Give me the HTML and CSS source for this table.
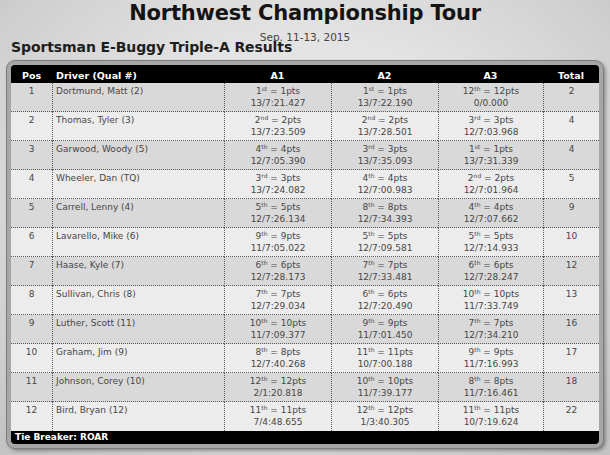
FILE: index.html
```html
<!DOCTYPE html>
<html lang="en">
<head>
<meta charset="utf-8">
<title>Northwest Championship Tour</title>
<link rel="stylesheet" href="styles.css">
</head>
<body>
<header class="head">
  <h1 class="title">Northwest Championship Tour</h1>
  <div class="date">Sep. 11-13, 2015</div>
  <h2 class="subtitle">Sportsman E-Buggy Triple-A Results</h2>
</header>
<div class="frame">
  <div class="board">
    <table class="results">
      <thead>
        <tr>
          <th class="c-pos">Pos</th>
          <th class="c-drv">Driver (Qual #)</th>
          <th class="c-a1">A1</th>
          <th class="c-a2">A2</th>
          <th class="c-a3">A3</th>
          <th class="c-tot">Total</th>
        </tr>
      </thead>
      <tbody>
        <tr class="odd">
          <td class="pos">1</td><td class="drv">Dortmund, Matt (2)</td>
          <td class="run">1<sup>st</sup> = 1pts<br>13/7:21.427</td>
          <td class="run">1<sup>st</sup> = 1pts<br>13/7:22.190</td>
          <td class="run">12<sup>th</sup> = 12pts<br>0/0.000</td>
          <td class="tot">2</td>
        </tr>
        <tr class="even">
          <td class="pos">2</td><td class="drv">Thomas, Tyler (3)</td>
          <td class="run">2<sup>nd</sup> = 2pts<br>13/7:23.509</td>
          <td class="run">2<sup>nd</sup> = 2pts<br>13/7:28.501</td>
          <td class="run">3<sup>rd</sup> = 3pts<br>12/7:03.968</td>
          <td class="tot">4</td>
        </tr>
        <tr class="odd">
          <td class="pos">3</td><td class="drv">Garwood, Woody (5)</td>
          <td class="run">4<sup>th</sup> = 4pts<br>12/7:05.390</td>
          <td class="run">3<sup>rd</sup> = 3pts<br>13/7:35.093</td>
          <td class="run">1<sup>st</sup> = 1pts<br>13/7:31.339</td>
          <td class="tot">4</td>
        </tr>
        <tr class="even">
          <td class="pos">4</td><td class="drv">Wheeler, Dan (TQ)</td>
          <td class="run">3<sup>rd</sup> = 3pts<br>13/7:24.082</td>
          <td class="run">4<sup>th</sup> = 4pts<br>12/7:00.983</td>
          <td class="run">2<sup>nd</sup> = 2pts<br>12/7:01.964</td>
          <td class="tot">5</td>
        </tr>
        <tr class="odd">
          <td class="pos">5</td><td class="drv">Carrell, Lenny (4)</td>
          <td class="run">5<sup>th</sup> = 5pts<br>12/7:26.134</td>
          <td class="run">8<sup>th</sup> = 8pts<br>12/7:34.393</td>
          <td class="run">4<sup>th</sup> = 4pts<br>12/7:07.662</td>
          <td class="tot">9</td>
        </tr>
        <tr class="even">
          <td class="pos">6</td><td class="drv">Lavarello, Mike (6)</td>
          <td class="run">9<sup>th</sup> = 9pts<br>11/7:05.022</td>
          <td class="run">5<sup>th</sup> = 5pts<br>12/7:09.581</td>
          <td class="run">5<sup>th</sup> = 5pts<br>12/7:14.933</td>
          <td class="tot">10</td>
        </tr>
        <tr class="odd">
          <td class="pos">7</td><td class="drv">Haase, Kyle (7)</td>
          <td class="run">6<sup>th</sup> = 6pts<br>12/7:28.173</td>
          <td class="run">7<sup>th</sup> = 7pts<br>12/7:33.481</td>
          <td class="run">6<sup>th</sup> = 6pts<br>12/7:28.247</td>
          <td class="tot">12</td>
        </tr>
        <tr class="even">
          <td class="pos">8</td><td class="drv">Sullivan, Chris (8)</td>
          <td class="run">7<sup>th</sup> = 7pts<br>12/7:29.034</td>
          <td class="run">6<sup>th</sup> = 6pts<br>12/7:20.490</td>
          <td class="run">10<sup>th</sup> = 10pts<br>11/7:33.749</td>
          <td class="tot">13</td>
        </tr>
        <tr class="odd">
          <td class="pos">9</td><td class="drv">Luther, Scott (11)</td>
          <td class="run">10<sup>th</sup> = 10pts<br>11/7:09.377</td>
          <td class="run">9<sup>th</sup> = 9pts<br>11/7:01.450</td>
          <td class="run">7<sup>th</sup> = 7pts<br>12/7:34.210</td>
          <td class="tot">16</td>
        </tr>
        <tr class="even">
          <td class="pos">10</td><td class="drv">Graham, Jim (9)</td>
          <td class="run">8<sup>th</sup> = 8pts<br>12/7:40.268</td>
          <td class="run">11<sup>th</sup> = 11pts<br>10/7:00.188</td>
          <td class="run">9<sup>th</sup> = 9pts<br>11/7:16.993</td>
          <td class="tot">17</td>
        </tr>
        <tr class="odd">
          <td class="pos">11</td><td class="drv">Johnson, Corey (10)</td>
          <td class="run">12<sup>th</sup> = 12pts<br>2/1:20.818</td>
          <td class="run">10<sup>th</sup> = 10pts<br>11/7:39.177</td>
          <td class="run">8<sup>th</sup> = 8pts<br>11/7:16.461</td>
          <td class="tot">18</td>
        </tr>
        <tr class="even last">
          <td class="pos">12</td><td class="drv">Bird, Bryan (12)</td>
          <td class="run">11<sup>th</sup> = 11pts<br>7/4:48.655</td>
          <td class="run">12<sup>th</sup> = 12pts<br>1/3:40.305</td>
          <td class="run">11<sup>th</sup> = 11pts<br>10/7:19.624</td>
          <td class="tot">22</td>
        </tr>
      </tbody>
      <tfoot>
        <tr>
          <th class="foot" colspan="6">Tie Breaker: ROAR</th>
        </tr>
      </tfoot>
    </table>
  </div>
</div>
</body>
</html>
```

FILE: styles.css
```css
html, body {
  margin: 0;
  padding: 0;
}
body {
  width: 610px;
  height: 455px;
  overflow: hidden;
  font-family: "DejaVu Sans", Verdana, sans-serif;
  background: radial-gradient(ellipse 70% 75% at 50% 42%, #ededed 0%, #e3e3e3 45%, #cfcfcf 85%, #c4c4c4 100%);
}
.head {
  padding-top: 1px;
}
.title {
  margin: 0;
  text-align: center;
  font-size: 21px;
  line-height: 24px;
  font-weight: bold;
  letter-spacing: -0.2px;
  color: #141414;
}
.date {
  margin-top: 7px;
  text-align: center;
  font-size: 10.5px;
  line-height: 10px;
  color: #444;
}
.subtitle {
  margin: -2px 0 0 11px;
  font-size: 14px;
  line-height: 14px;
  font-weight: bold;
  letter-spacing: -0.1px;
  color: #1e1e1e;
}
.frame {
  box-sizing: border-box;
  width: 596px;
  margin: 7px 0 0 7px;
  border: 4px solid #a6a6a6;
  border-radius: 8px;
  background: #000;
  box-shadow: 0 0 0 1px #7d7d7d, 2px 2px 4px rgba(0, 0, 0, 0.45);
}
.board {
  border-radius: 5px;
  overflow: hidden;
  background: #000;
  padding-bottom: 0;
}
.results {
  width: 588px;
  table-layout: fixed;
  border-collapse: separate;
  border-spacing: 0;
  font-size: 9px;
  color: #474747;
}
.results th, .results td {
  box-sizing: border-box;
  padding: 0;
}
.results thead th {
  height: 18px;
  padding: 5px 0 1px;
  font-size: 9.5px;
  line-height: 12px;
  font-weight: bold;
  color: #fff;
  text-align: center;
}
.results thead th.c-drv {
  text-align: left;
  padding-left: 4px;
}
.c-pos { width: 41px; }
.c-drv { width: 172px; }
.c-a1 { width: 107px; }
.c-a2 { width: 107px; }
.c-a3 { width: 105px; }
.c-tot { width: 56px; }

.results tbody td {
  vertical-align: top;
  line-height: 12px;
  padding: 2px 3px 2px;
  border-bottom: 1px dotted #5a5a5a;
  border-left: 1px dotted #5a5a5a;
  text-align: center;
  white-space: nowrap;
}
.results tbody td.pos {
  border-left: none;
}
.results tbody td.drv {
  text-align: left;
}
.results tbody tr.last td {
  border-bottom: none;
  padding-bottom: 3px;
}
.odd td {
  background: #d9d9d9;
}
.even td {
  background: #ececec;
}
.results sup {
  font-size: 6px;
  line-height: 0;
  vertical-align: 3px;
}
.results tfoot th.foot {
  padding: 0 0 1px 4px;
  height: 13px;
  font-size: 9px;
  line-height: 12px;
  font-weight: bold;
  color: #fff;
  text-align: left;
}
```
